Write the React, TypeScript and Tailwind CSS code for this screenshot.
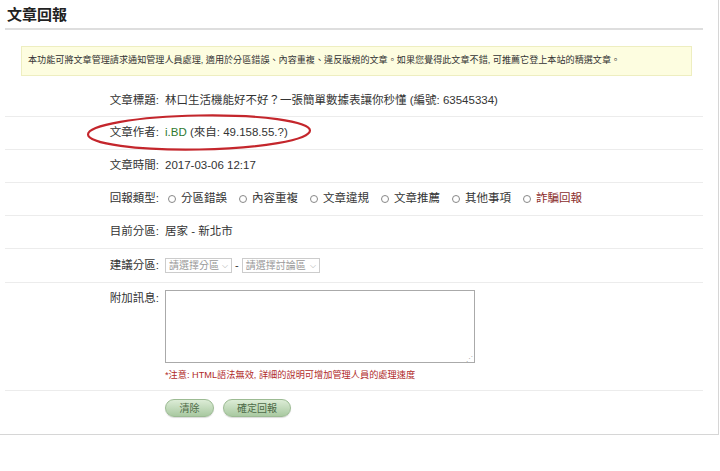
import React from "react";

const font = { fontFamily: '"Liberation Sans", "Noto Sans CJK TC", sans-serif' };

const Row = ({ label, children, className = "" }: { label: string; children: React.ReactNode; className?: string }) => (
  <div className={`flex border-b border-[#ececec] ${className}`}>
    <div className="w-[156px] shrink-0 text-right pr-[2px] text-[#333]">{label}:</div>
    <div className="flex-1 pl-[4px] text-[#333]">{children}</div>
  </div>
);

const Radio = ({ text, red }: { text: string; red?: boolean }) => (
  <span className="flex items-center mr-[9px]">
    <span className="w-[8px] h-[8px] rounded-full border border-[#888] mr-[5px] ml-[3px]" />
    <span className={red ? "text-[#8b2e2e]" : "text-[#333]"}>{text}</span>
  </span>
);

export default function App() {
  return (
    <div className="w-[720px] h-[471px] bg-white relative" style={font}>
      <div className="w-[719px] h-[435px] border-r border-b border-[#d6d6d6] px-[5px] pt-[6px]">
        <div className="w-[698px]">
          <h1 className="text-[15px] font-semibold text-[#222] pl-[2px] pb-[4px] border-b-2 border-[#dedede] leading-[18px]">
            文章回報
          </h1>
          <div className="ml-[16px] mr-[11px] mt-[16px] h-[30px] bg-[#fdfde0] border border-[#eeeec0] flex items-center pl-[6px] text-[9.1px] text-[#333]">
            本功能可將文章管理請求通知管理人員處理, 適用於分區錯誤、內容重複、違反版規的文章。如果您覺得此文章不錯, 可推薦它登上本站的精選文章。
          </div>
          <div className="mt-[9px] text-[11.5px]">
            <Row label="文章標題" className="h-[32px] items-center">
              林口生活機能好不好？一張簡單數據表讓你秒懂 (編號: 63545334)
            </Row>
            <Row label="文章作者" className="h-[33px] items-center">
              <span className="text-[#2f7a2f]">i.BD</span> (來自: 49.158.55.?)
            </Row>
            <Row label="文章時間" className="h-[33px] items-center">
              2017-03-06 12:17
            </Row>
            <Row label="回報類型" className="h-[33px] items-center">
              <div className="flex items-center">
                <Radio text="分區錯誤" />
                <Radio text="內容重複" />
                <Radio text="文章違規" />
                <Radio text="文章推薦" />
                <Radio text="其他事項" />
                <Radio text="詐騙回報" red />
              </div>
            </Row>
            <Row label="目前分區" className="h-[33px] items-center">
              居家 - 新北市
            </Row>
            <Row label="建議分區" className="h-[34px] items-center">
              <div className="flex items-center text-[10px] text-[#999]">
                <span className="flex items-center justify-between w-[67px] h-[15px] border border-[#ccc] px-[3px]">
                  請選擇分區<span className="text-[8px] text-[#aaa]">⌵</span>
                </span>
                <span className="mx-[3px] text-[#333] text-[11px]">-</span>
                <span className="flex items-center justify-between w-[78px] h-[15px] border border-[#ccc] px-[3px]">
                  請選擇討論區<span className="text-[8px] text-[#aaa]">⌵</span>
                </span>
              </div>
            </Row>
            <Row label="附加訊息" className="h-[108px] pt-[7px]">
              <div className="w-[310px] h-[73px] border border-[#aaa] relative">
                <span className="absolute right-[1px] bottom-[0px] text-[7px] text-[#aaa] leading-none">⋰</span>
              </div>
              <div className="mt-[6px] text-[9.2px] text-[#b02a2a]">
                *注意: HTML語法無效, 詳細的說明可增加管理人員的處理速度
              </div>
            </Row>
            <div className="flex pt-[8px] pl-[160px] gap-[9px]">
              <button className="w-[49px] h-[18px] rounded-full border border-[#9cbb93] bg-gradient-to-b from-[#dcecd6] to-[#a9c9a1] text-[10px] text-[#4d6a47] shadow-[0_1px_1px_rgba(0,0,0,0.15)]">
                清除
              </button>
              <button className="w-[68px] h-[18px] rounded-full border border-[#9cbb93] bg-gradient-to-b from-[#dcecd6] to-[#a9c9a1] text-[10px] text-[#4d6a47] shadow-[0_1px_1px_rgba(0,0,0,0.15)]">
                確定回報
              </button>
            </div>
          </div>
        </div>
      </div>
      <svg className="absolute left-[84px] top-[112px]" width="232" height="42" viewBox="0 0 232 42">
        <ellipse cx="115" cy="20.5" rx="111" ry="17" fill="none" stroke="#c4262c" strokeWidth="2.2" transform="rotate(-1 115 20.5)" />
      </svg>
    </div>
  );
}
